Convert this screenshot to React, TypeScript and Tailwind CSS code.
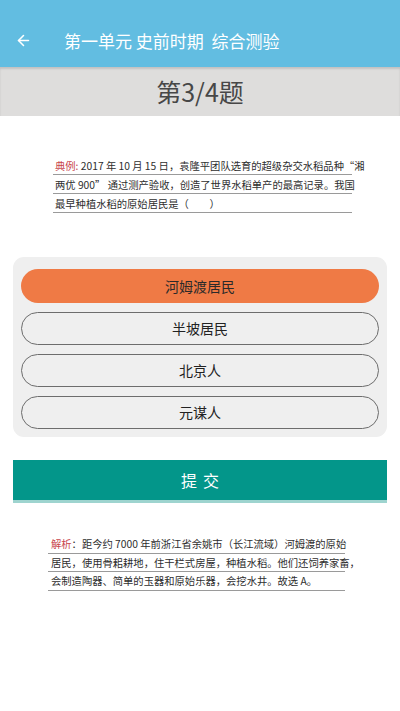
import { ArrowLeft } from "lucide-react";

const FONT = { fontFamily: '"Noto Sans CJK SC", "Noto Sans", sans-serif' };

const question = [
  [
    <span key="a" className="text-[#c8454b]">典例: </span>,
    "2017 年 10 月 15 日，袁隆平团队选育的超级杂交水稻品种“湘",
  ],
  ["两优 900” 通过测产验收，创造了世界水稻单产的最高记录。我国"],
  ["最早种植水稻的原始居民是（　　）"],
];

const analysis = [
  [
    <span key="a" className="text-[#c8454b]">解析</span>,
    "：距今约 7000 年前浙江省余姚市（长江流域）河姆渡的原始",
  ],
  ["居民，使用骨耜耕地，住干栏式房屋，种植水稻。他们还饲养家畜，"],
  ["会制造陶器、简单的玉器和原始乐器，会挖水井。故选 A。"],
];

const options = ["河姆渡居民", "半坡居民", "北京人", "元谋人"];

function Lined({
  lines,
  className,
  lineClass,
}: {
  lines: React.ReactNode[][];
  className: string;
  lineClass: string;
}) {
  return (
    <div className={className}>
      {lines.map((l, i) => (
        <div
          key={i}
          className={`whitespace-nowrap border-b border-[#9a9a9a] text-[10.3px] text-[#2e2e2e] ${lineClass}`}
        >
          {l}
        </div>
      ))}
    </div>
  );
}

export default function App() {
  return (
    <div className="w-[400px] h-[711px] bg-white overflow-hidden" style={FONT}>
      <div className="h-[67px] bg-[#62bde1] flex items-end pb-[14px] pl-[15px] text-white">
        <ArrowLeft size={17} strokeWidth={2.2} className="mb-[4px]" />
        <span className="ml-[32px] text-[17px] leading-[24px]">
          第一单元 史前时期&nbsp;&nbsp;综合测验
        </span>
      </div>
      <div className="h-[49px] bg-[#dedddc] flex items-center justify-center text-[25px] text-[#474747] shadow-[inset_0_2px_2px_rgba(0,0,0,0.12)]">
        第3/4题
      </div>

      <Lined
        lines={question}
        className="ml-[53px] mr-[48px] mt-[40px]"
        lineClass="h-[19px] leading-[19px] pl-[2px]"
      />

      <div className="mx-[13px] mt-[44px] bg-[#efefef] rounded-[11px] px-[8px] pt-[12px] pb-[8px] flex flex-col gap-[9px]">
        {options.map((o, i) =>
          i === 0 ? (
            <div
              key={o}
              className="h-[34px] rounded-full bg-[#ef7a45] flex items-center justify-center text-[14px] text-[#2a2a2a]"
            >
              {o}
            </div>
          ) : (
            <div
              key={o}
              className="h-[33px] rounded-full border-[1.5px] border-[#6d6d6d] flex items-center justify-center text-[14px] text-[#222]"
            >
              {o}
            </div>
          )
        )}
      </div>

      <div className="mx-[13px] mt-[23px] h-[43px] bg-[#03968a] border-b-[3px] border-[#9ed4cf] flex items-center justify-center text-white text-[16px] tracking-[6px] pl-[6px]">
        提交
      </div>

      <Lined
        lines={analysis}
        className="ml-[48px] mr-[55px] mt-[32px]"
        lineClass="h-[18.5px] leading-[18px] pl-[3px]"
      />
    </div>
  );
}
